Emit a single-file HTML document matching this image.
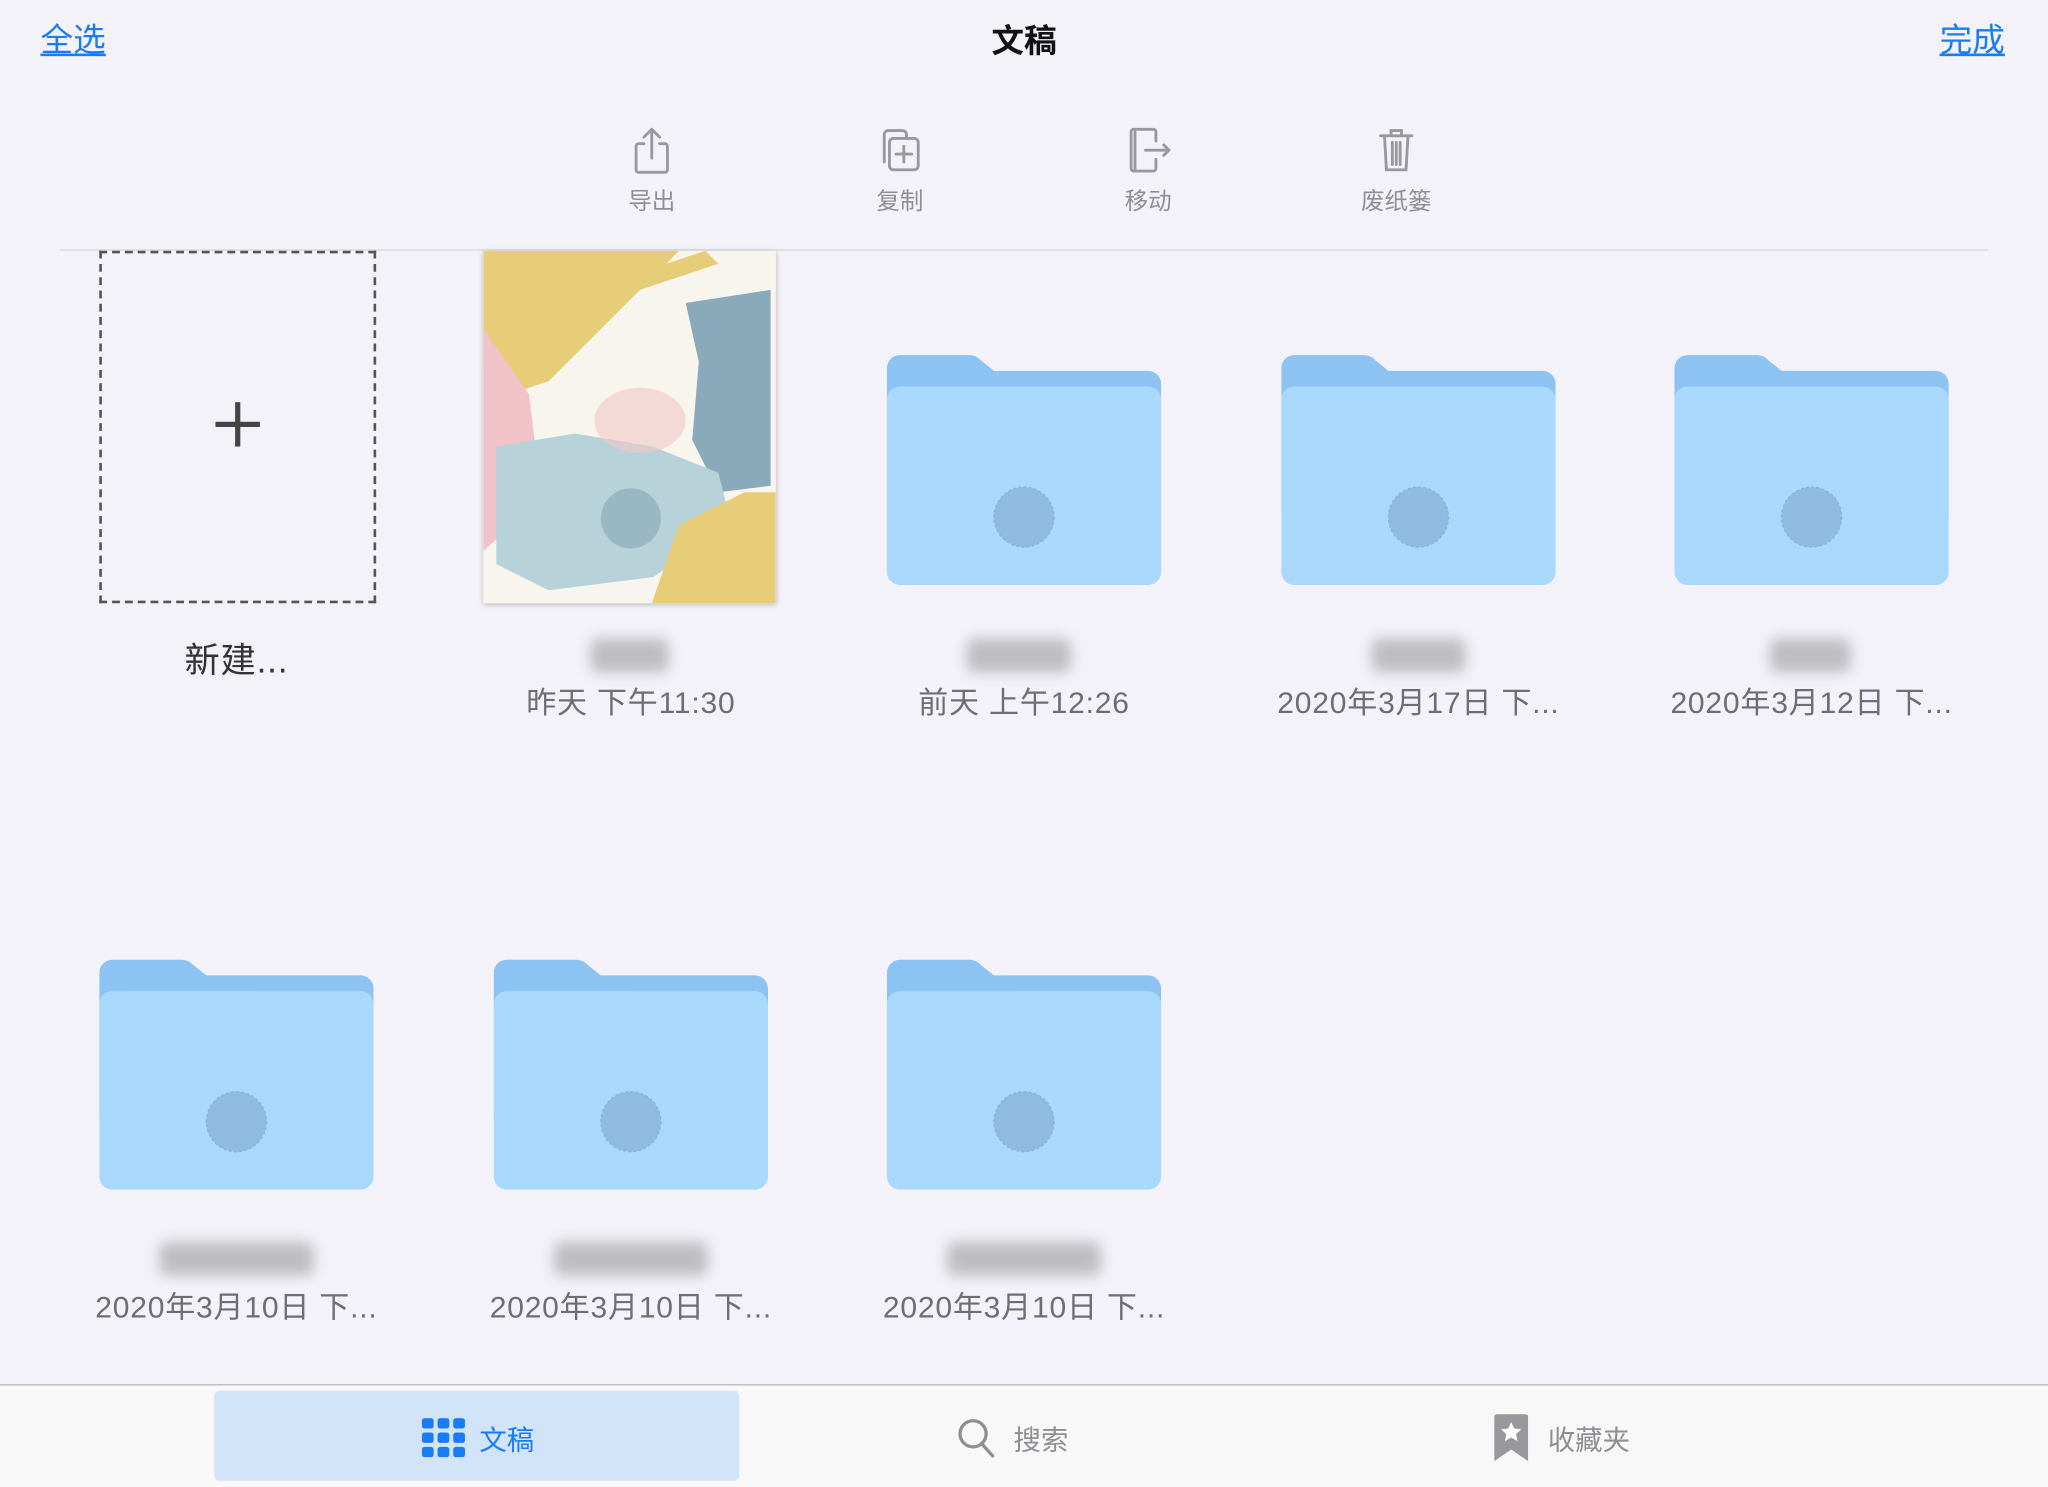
<!DOCTYPE html>
<html><head><meta charset="utf-8"><style>
html,body{margin:0;padding:0;width:2048px;height:1486px;overflow:hidden;background:#f3f2f8}
#w{position:absolute;left:0;top:0;width:1568px;height:1138px;transform:scale(1.30612,1.30580);transform-origin:0 0;font-family:"Liberation Sans","Noto Sans CJK SC",sans-serif}
.a{position:absolute}
.lk{color:#1a7cf5;font-size:25px;text-decoration:underline;top:11px}
.tb{position:absolute;top:96px;width:80px;text-align:center;color:#8e8e93;font-size:18px}
.tb svg{display:block;margin:0 auto 6px}
.nm{position:absolute;width:300px;text-align:center;font-size:23px;letter-spacing:.6px;color:#6d6d72}
.bl{position:absolute;height:26px;background:#bdbdc2;filter:blur(5px);border-radius:6px}
</style></head><body><div id="w">
<div class="a lk" style="left:31px">全选</div>
<div class="a" style="left:0;width:1568px;top:12px;text-align:center;font-size:25px;font-weight:bold;color:#111">文稿</div>
<div class="a lk" style="right:33px">完成</div>

<div class="tb" style="left:459px"><svg width="36" height="38" viewBox="0 0 36 38" fill="none" stroke="#98989d" stroke-width="2.2" stroke-linecap="round" stroke-linejoin="round"><path d="M12 14H8a2 2 0 0 0-2 2v18a2 2 0 0 0 2 2h20a2 2 0 0 0 2-2V16a2 2 0 0 0-2-2h-4"/><path d="M18 25V3M12 9l6-6 6 6"/></svg>导出</div>
<div class="tb" style="left:649px"><svg width="36" height="38" viewBox="0 0 36 38" fill="none" stroke="#98989d" stroke-width="2.2" stroke-linecap="round"><path d="M6 28V7a3 3 0 0 1 3-3h11a3 3 0 0 1 3 3v2"/><rect x="10" y="10" width="22" height="24" rx="3"/><path d="M21 16v12M15 22h12"/></svg>复制</div>
<div class="tb" style="left:839px"><svg width="36" height="38" viewBox="0 0 36 38" fill="none" stroke="#98989d" stroke-width="2.2" stroke-linecap="round" stroke-linejoin="round"><path d="M24 12V5a2 2 0 0 0-2-2H7a2 2 0 0 0-2 2v28a2 2 0 0 0 2 2h15a2 2 0 0 0 2-2v-7"/><path d="M8 5v28M16 19h18M30 15l4 4-4 4"/></svg>移动</div>
<div class="tb" style="left:1029px"><svg width="36" height="38" viewBox="0 0 36 38" fill="none" stroke="#98989d" stroke-width="2.2" stroke-linecap="round"><path d="M6 8h24M14 8V4h8v4M9 8l1.5 26h15L27 8M15 13v17M18 13v17M21 13v17"/></svg>废纸篓</div>
<div class="a" style="left:46px;top:191px;width:1476px;height:1px;background:#d8d8dc"></div>

<div class="a" style="left:76px;top:192px;width:208px;height:266px;border:2px dashed #555"></div>
<div class="a" style="left:165px;top:323px;width:34px;height:4px;background:#444"></div>
<div class="a" style="left:180px;top:308px;width:4px;height:34px;background:#444"></div>
<div class="nm" style="left:31px;top:484px;font-size:27px;color:#333">新建...</div>

<div class="a" style="left:370px;top:192px;width:224px;height:270px;overflow:hidden;background:#f8f5ef;box-shadow:0 1px 4px rgba(0,0,0,.25)">
<svg width="224" height="270" viewBox="0 0 224 270"><path d="M0 0h150l-40 40-60 60-30 10-20-20z" fill="#e8cd78"/><path d="M0 60l35 50 10 80-45 40z" fill="#f2c2c9"/><path d="M155 40l65-10v150l-40 5-20-40 5-60z" fill="#8aa9ba"/><path d="M10 150l60-10 60 10 50 20 10 40-60 40-80 10-40-20z" fill="#b7d2d9"/><path d="M150 210l50-25 24 0v85h-95z" fill="#e8cd78"/><path d="M110 20l60-20 10 10-60 20z" fill="#e8cd78"/><ellipse cx="120" cy="130" rx="35" ry="25" fill="#f0c8c6" opacity=".6"/><circle cx="113" cy="205" r="23" fill="#9ab7c4"/></svg></div>
<div class="bl" style="left:452px;top:489px;width:60px"></div>
<div class="nm" style="left:333px;top:519px">昨天 下午11:30</div>

<svg width="0" height="0" style="position:absolute"><defs><g id="f"><path d="M0 14a10 10 0 0 1 10-10h52a12 12 0 0 1 10 4l10 8h118a10 10 0 0 1 10 10v100H0z" fill="#8dc3f3"/><rect x="0" y="28" width="210" height="152" rx="10" fill="#a9d8fd"/><circle cx="105" cy="128" r="23" fill="#8fbbe3" stroke="#86b1d8" stroke-dasharray="2 2"/></g></defs></svg>

<svg class="a" style="left:679px;top:268px" width="210" height="180" viewBox="0 0 210 180"><use href="#f"/></svg>
<div class="bl" style="left:740px;top:489px;width:80px"></div>
<div class="nm" style="left:634px;top:519px">前天 上午12:26</div>
<svg class="a" style="left:981px;top:268px" width="210" height="180" viewBox="0 0 210 180"><use href="#f"/></svg>
<div class="bl" style="left:1050px;top:489px;width:72px"></div>
<div class="nm" style="left:936px;top:519px">2020年3月17日 下...</div>
<svg class="a" style="left:1282px;top:268px" width="210" height="180" viewBox="0 0 210 180"><use href="#f"/></svg>
<div class="bl" style="left:1355px;top:489px;width:62px"></div>
<div class="nm" style="left:1237px;top:519px">2020年3月12日 下...</div>

<svg class="a" style="left:76px;top:731px" width="210" height="180" viewBox="0 0 210 180"><use href="#f"/></svg>
<div class="bl" style="left:122px;top:951px;width:118px"></div>
<div class="nm" style="left:31px;top:982px">2020年3月10日 下...</div>
<svg class="a" style="left:378px;top:731px" width="210" height="180" viewBox="0 0 210 180"><use href="#f"/></svg>
<div class="bl" style="left:424px;top:951px;width:118px"></div>
<div class="nm" style="left:333px;top:982px">2020年3月10日 下...</div>
<svg class="a" style="left:679px;top:731px" width="210" height="180" viewBox="0 0 210 180"><use href="#f"/></svg>
<div class="bl" style="left:725px;top:951px;width:118px"></div>
<div class="nm" style="left:634px;top:982px">2020年3月10日 下...</div>

<div class="a" style="left:0;top:1060px;width:1568px;height:78px;background:#f8f8f8;border-top:1px solid #b8b8bc"></div>
<div class="a" style="left:164px;top:1065px;width:402px;height:69px;background:#d1e4f8;border-radius:4px"></div>
<svg class="a" style="left:323px;top:1086px" width="34" height="30" viewBox="0 0 34 30" fill="#1a7cf5"><rect x="0" y="0" width="9" height="8" rx="2"/><rect x="12" y="0" width="9" height="8" rx="2"/><rect x="24" y="0" width="9" height="8" rx="2"/><rect x="0" y="11" width="9" height="8" rx="2"/><rect x="12" y="11" width="9" height="8" rx="2"/><rect x="24" y="11" width="9" height="8" rx="2"/><rect x="0" y="22" width="9" height="8" rx="2"/><rect x="12" y="22" width="9" height="8" rx="2"/><rect x="24" y="22" width="9" height="8" rx="2"/></svg>
<div class="a" style="left:367px;top:1087px;font-size:21px;color:#1a7cf5">文稿</div>
<svg class="a" style="left:732px;top:1085px" width="32" height="32" viewBox="0 0 32 32" fill="none" stroke="#8e8e93" stroke-width="2.5" stroke-linecap="round"><circle cx="13" cy="13" r="10"/><path d="M20 21l8 9"/></svg>
<div class="a" style="left:776px;top:1087px;font-size:21px;color:#8e8e93">搜索</div>
<svg class="a" style="left:1144px;top:1083px" width="26" height="36" viewBox="0 0 26 36"><path d="M0 2a2 2 0 0 1 2-2h22a2 2 0 0 1 2 2v34l-13-9-13 9z" fill="#98989d"/><path d="M13 6l2.3 5 5.4.6-4 3.7 1.1 5.3-4.8-2.7-4.8 2.7 1.1-5.3-4-3.7 5.4-.6z" fill="#fff"/></svg>
<div class="a" style="left:1185px;top:1087px;font-size:21px;color:#8e8e93">收藏夹</div>
</div></body></html>
